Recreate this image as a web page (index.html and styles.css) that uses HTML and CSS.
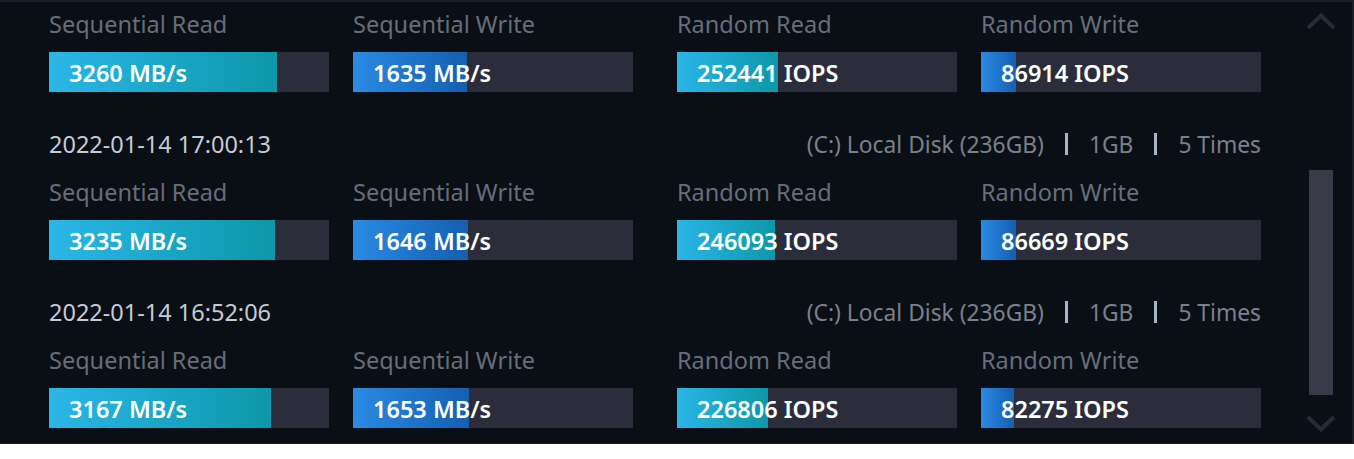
FILE: index.html
```html
<!DOCTYPE html>
<html>
<head>
<meta charset="utf-8">
<link rel="stylesheet" href="styles.css">
</head>
<body>
<div class="panel">
  <div class="list">
    <section class="record">
      <div class="metrics">
        <div class="group">
          <div class="metric"><div class="label">Sequential Read</div><div class="bar read"><div class="fill" style="width:81.5%"></div><span class="val">3260 MB/s</span></div></div>
          <div class="metric"><div class="label">Sequential Write</div><div class="bar write"><div class="fill" style="width:40.875%"></div><span class="val">1635 MB/s</span></div></div>
        </div>
        <div class="group">
          <div class="metric"><div class="label">Random Read</div><div class="bar read"><div class="fill" style="width:36.06%"></div><span class="val">252441 IOPS</span></div></div>
          <div class="metric"><div class="label">Random Write</div><div class="bar write"><div class="fill" style="width:12.42%"></div><span class="val">86914 IOPS</span></div></div>
        </div>
      </div>
    </section>
    <section class="record">
      <div class="rec-head">
        <span class="date">2022-01-14 17:00:13</span>
        <div class="meta"><span>(C:) Local Disk (236GB)</span><i class="sep"></i><span>1GB</span><i class="sep"></i><span>5 Times</span></div>
      </div>
      <div class="metrics">
        <div class="group">
          <div class="metric"><div class="label">Sequential Read</div><div class="bar read"><div class="fill" style="width:80.875%"></div><span class="val">3235 MB/s</span></div></div>
          <div class="metric"><div class="label">Sequential Write</div><div class="bar write"><div class="fill" style="width:41.15%"></div><span class="val">1646 MB/s</span></div></div>
        </div>
        <div class="group">
          <div class="metric"><div class="label">Random Read</div><div class="bar read"><div class="fill" style="width:35.16%"></div><span class="val">246093 IOPS</span></div></div>
          <div class="metric"><div class="label">Random Write</div><div class="bar write"><div class="fill" style="width:12.38%"></div><span class="val">86669 IOPS</span></div></div>
        </div>
      </div>
    </section>
    <section class="record">
      <div class="rec-head">
        <span class="date">2022-01-14 16:52:06</span>
        <div class="meta"><span>(C:) Local Disk (236GB)</span><i class="sep"></i><span>1GB</span><i class="sep"></i><span>5 Times</span></div>
      </div>
      <div class="metrics">
        <div class="group">
          <div class="metric"><div class="label">Sequential Read</div><div class="bar read"><div class="fill" style="width:79.175%"></div><span class="val">3167 MB/s</span></div></div>
          <div class="metric"><div class="label">Sequential Write</div><div class="bar write"><div class="fill" style="width:41.325%"></div><span class="val">1653 MB/s</span></div></div>
        </div>
        <div class="group">
          <div class="metric"><div class="label">Random Read</div><div class="bar read"><div class="fill" style="width:32.4%"></div><span class="val">226806 IOPS</span></div></div>
          <div class="metric"><div class="label">Random Write</div><div class="bar write"><div class="fill" style="width:11.75%"></div><span class="val">82275 IOPS</span></div></div>
        </div>
      </div>
    </section>
  </div>
  <div class="scrollbar">
    <svg class="arrow" width="30" height="17" viewBox="0 0 30 17"><path d="M2 15 L15 2.5 L28 15" fill="none" stroke="#262b35" stroke-width="4"/></svg>
    <div class="track"><div class="thumb" style="margin-top:140px;height:225px"></div></div>
    <svg class="arrow" width="30" height="17" viewBox="0 0 30 17"><path d="M2 2 L15 14.5 L28 2" fill="none" stroke="#262b35" stroke-width="4"/></svg>
  </div>
</div>
</body>
</html>
```
FILE: styles.css
```css
body {
  margin: 0;
  background: #ffffff;
  font-family: "Noto Sans", sans-serif;
}
.panel {
  display: flex;
  height: 444px;
  box-sizing: border-box;
  background: #0a0e15;
  border-top: 2px solid #1a1f28;
  border-right: 2px solid #1a1f28;
  border-bottom: 1px solid #161b24;
  padding-left: 49px;
  overflow: hidden;
}
.list {
  width: 1212px;
  padding-top: 2px;
}
.record {
  padding-bottom: 32px;
}
.rec-head {
  height: 40px;
  display: flex;
  align-items: center;
  justify-content: space-between;
  margin-bottom: 8px;
}
.date {
  color: #c6cad2;
  font-size: 23.5px;
}
.meta {
  display: flex;
  align-items: center;
  gap: 21px;
  color: #7b808b;
  font-size: 22.8px;
}
.sep {
  width: 3px;
  height: 22px;
  background: #a7b4c9;
}
.metrics {
  display: flex;
  gap: 44px;
}
.group {
  display: flex;
  gap: 24px;
}
.metric {
  width: 280px;
}
.label {
  height: 40px;
  line-height: 40px;
  margin-bottom: 8px;
  color: #676e7b;
  font-size: 23.5px;
}
.bar {
  position: relative;
  height: 40px;
  box-sizing: border-box;
  background: #2b2e3a;
  display: flex;
  align-items: center;
  padding: 2px 0 0 20px;
}
.fill {
  position: absolute;
  left: 0;
  top: 0;
  bottom: 0;
}
.read .fill {
  background: linear-gradient(90deg, #2ab6e8, #0d97a8);
}
.write .fill {
  background: linear-gradient(90deg, #2a8ae4, #145fb0);
}
.val {
  position: relative;
  color: #ffffff;
  font-weight: 600;
  font-size: 23.5px;
}
.scrollbar {
  width: 30px;
  margin-left: 45px;
  display: flex;
  flex-direction: column;
  align-items: center;
  padding: 11px 0;
}
.arrow {
  display: block;
  flex: none;
}
.track {
  flex: 1;
  display: flex;
  flex-direction: column;
  align-items: center;
}
.thumb {
  width: 24px;
  background: #393c48;
}
```
